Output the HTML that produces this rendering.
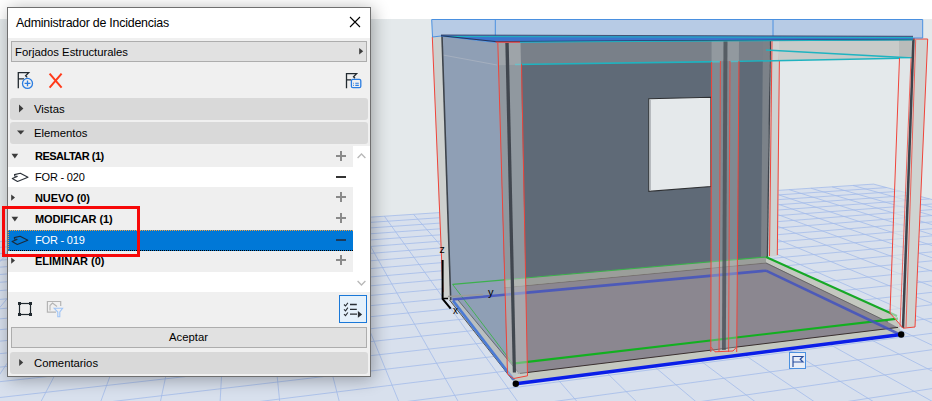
<!DOCTYPE html>
<html><head><meta charset="utf-8">
<style>
*{margin:0;padding:0;box-sizing:border-box}
html,body{width:932px;height:401px;overflow:hidden;background:#fff;font-family:"Liberation Sans",sans-serif}
svg{position:absolute;left:0;top:0;overflow:visible}
.dlg{position:absolute;left:7px;top:7px;width:364px;height:370px;border:1px solid #6f6f6f;background:#f0f0f0;box-shadow:2px 2px 16px rgba(0,0,0,0.32)}
.a{position:absolute;white-space:nowrap;line-height:1}
.t{font-size:11.3px;color:#000}
.box{background:#e1e1e1;border:1px solid #adadad}
.bar{background:#d9d9d9;border-radius:3px}
.b{font-weight:bold;font-size:11px;letter-spacing:-0.5px;color:#000}
.n{font-size:11px;letter-spacing:-0.2px;color:#000}

</style></head><body>
<svg id="scene" width="932" height="401" viewBox="0 0 932 401">
<rect x="0" y="19" width="932" height="382" fill="#e4e9eb"/>
<polygon points="-261.1,258.6 873.5,184.1 1526.8,356.5 -1731.1,964.6" fill="#d8e0ed"/>
<path d="M-1731.1 964.6L1526.8 356.5 M-1524.4 865.3L1475.8 343.0 M-1357.0 784.9L1428.7 330.6 M-1218.5 718.4L1385.0 319.1 M-1102.2 662.5L1344.4 308.4 M-1003.0 614.9L1306.6 298.4 M-917.4 573.8L1271.4 289.1 M-842.9 538.0L1238.3 280.4 M-777.4 506.6L1207.4 272.2 M-719.3 478.7L1178.3 264.5 M-667.5 453.8L1150.9 257.3 M-621.0 431.5L1125.0 250.5 M-579.0 411.3L1100.6 244.0 M-540.9 393.0L1077.5 237.9 M-506.2 376.4L1055.6 232.2 M-474.5 361.1L1034.8 226.7 M-445.3 347.1L1015.1 221.5 M-418.4 334.2L996.3 216.5 M-393.6 322.3L978.4 211.8 M-370.5 311.2L961.3 207.3 M-349.1 300.9L945.0 203.0 M-329.1 291.3L929.5 198.9 M-310.4 282.3L914.6 195.0 M-293.0 273.9L900.3 191.2 M-276.5 266.0L886.6 187.6 M-261.1 258.6L873.5 184.1 M-1731.1 964.6L-261.1 258.6 M-1499.5 921.3L-217.8 255.8 M-1288.3 881.9L-175.6 253.0 M-1094.9 845.8L-134.4 250.3 M-917.1 812.6L-94.2 247.7 M-753.1 782.0L-54.8 245.1 M-601.4 753.7L-16.4 242.6 M-460.6 727.4L21.1 240.1 M-329.6 703.0L57.9 237.7 M-207.4 680.2L93.8 235.3 M-93.2 658.9L128.9 233.0 M13.9 638.9L163.2 230.8 M114.4 620.1L196.9 228.6 M209.0 602.5L229.8 226.4 M298.1 585.8L262.0 224.3 M382.2 570.1L293.6 222.2 M461.8 555.3L324.5 220.2 M537.1 541.2L354.7 218.2 M608.6 527.9L384.4 216.2 M676.4 515.2L413.5 214.3 M740.9 503.2L442.0 212.5 M802.4 491.7L470.0 210.6 M860.9 480.8L497.4 208.8 M916.8 470.4L524.2 207.1 M970.2 460.4L550.6 205.3 M1021.3 450.9L576.5 203.6 M1070.1 441.7L601.9 202.0 M1117.0 433.0L626.8 200.3 M1161.9 424.6L651.3 198.7 M1205.0 416.6L675.3 197.1 M1246.4 408.8L698.9 195.6 M1286.2 401.4L722.1 194.1 M1324.4 394.3L744.9 192.6 M1361.3 387.4L767.3 191.1 M1396.8 380.8L789.3 189.7 M1431.1 374.4L810.9 188.2 M1464.1 368.2L832.1 186.9 M1496.0 362.2L853.0 185.5 M1526.8 356.5L873.5 184.1" stroke="#a3bbea" stroke-width="0.8" fill="none"/>

<polygon points="452.6,284.4 766,257 897,316 901,335 515.8,383.7 449.5,300" fill="#c4c8c0" />
<polygon points="458,292 766,262.6 888,322 898,327.4 528,372.5 518,374 458,300" fill="#8b8790" />
<polygon points="452.6,284.4 766,257 766,262.6 452.6,292" fill="#9b9e9a" />
<line x1="452.6" y1="292.5" x2="766" y2="263" stroke="#6e6a66" stroke-width="0.8" stroke-opacity="1"/>
<line x1="766" y1="263" x2="888" y2="322" stroke="#5a5a5a" stroke-width="0.8" stroke-opacity="1"/>
<line x1="520" y1="373.4" x2="898" y2="327.4" stroke="#3a3030" stroke-width="1" stroke-opacity="1"/>
<polygon points="450,40 767,37 767,257 452.6,284.4" fill="#5f6a77" />
<polygon points="450,40 767,37 767,60.5 450,66" fill="#798089" />
<line x1="515" y1="64.5" x2="720" y2="61.6" stroke="#1fb3c0" stroke-width="1.6" stroke-opacity="1"/>
<polygon points="648.8,98.8 710.9,97.2 710.9,186.6 648.8,191.4" fill="#e5e9eb" stroke="#2e3033" stroke-width="1.1"/>
<line x1="650.3" y1="99.5" x2="650.3" y2="190.5" stroke="#b4b8bc" stroke-width="1.3" stroke-opacity="1"/>
<polygon points="763,38 770,38 767.4,257 761,258" fill="#7c8289" />
<polygon points="770,40 780,40 778,256 767.4,257" fill="#cfd2d1" />
<line x1="770.5" y1="38" x2="767.4" y2="257" stroke="#3e444c" stroke-width="1.3" stroke-opacity="1"/>
<line x1="772" y1="40" x2="769.5" y2="256" stroke="#f0443a" stroke-width="1" stroke-opacity="1"/>
<line x1="779.6" y1="40" x2="777.3" y2="255" stroke="#f0443a" stroke-width="1" stroke-opacity="1"/>
<polygon points="779,40 913,40 913,58 779,60.5" fill="#c8cbc9" />
<polygon points="899,40 913,40 913,58 899,58.3" fill="#b9bcba" />
<line x1="766" y1="50" x2="913" y2="58" stroke="#1fb3c0" stroke-width="1.3" stroke-opacity="1"/>
<line x1="730" y1="61.5" x2="913" y2="58" stroke="#1fb3c0" stroke-width="1.5" stroke-opacity="1"/>
<polygon points="432.3,37 442,36 450.7,300 442.6,299" fill="#cdd0ce" />
<line x1="432.3" y1="37" x2="443" y2="292" stroke="#f0443a" stroke-width="1" stroke-opacity="1"/>
<polygon points="442,36 498,42 507,374 458,300 450.7,300" fill="#8f9fb5" />
<line x1="443" y1="55" x2="497" y2="65" stroke="#a9b3c0" stroke-width="0.8" stroke-opacity="1"/>
<line x1="442" y1="36" x2="450.7" y2="300" stroke="#3e444c" stroke-width="1.6" stroke-opacity="1"/>
<polygon points="449.5,300 458,300 518,372 513,380" fill="#b9bfc0" />
<line x1="458" y1="300" x2="518" y2="372" stroke="#555a60" stroke-width="0.8" stroke-opacity="1"/>
<line x1="449.5" y1="300" x2="512.4" y2="379.8" stroke="#333" stroke-width="0.8" stroke-opacity="1"/>
<line x1="453" y1="300.6" x2="514" y2="380" stroke="#4b7bd4" stroke-width="2.6" stroke-opacity="1"/>
<line x1="452.6" y1="284.4" x2="512.7" y2="363.6" stroke="#45b055" stroke-width="1" stroke-opacity="1"/>
<line x1="452.6" y1="284.4" x2="766" y2="257" stroke="#3cb04c" stroke-width="1.1" stroke-opacity="1"/>
<line x1="766" y1="257" x2="897" y2="316" stroke="#16a826" stroke-width="2" stroke-opacity="1"/>
<line x1="512.7" y1="363.6" x2="898" y2="318.6" stroke="#12b020" stroke-width="2.2" stroke-opacity="1"/>
<line x1="452.6" y1="299.5" x2="766" y2="270.7" stroke="#4252c0" stroke-width="2.6" stroke-opacity="0.85"/>
<line x1="766" y1="270.7" x2="901" y2="335" stroke="#4252c0" stroke-width="2.6" stroke-opacity="0.85"/>
<polygon points="497.8,42 520.5,42 527.5,375.8 513.6,378.5 507.5,374" fill="#cdd0d0" fill-opacity="0.45"/>
<polygon points="505.3,42 508.7,42 516,372.4 512.8,372.4" fill="#41474f" />
<polyline points="497.8,42 507.5,374 513.6,378.5 527.5,375.8 521.5,64" fill="none" stroke="#f0443a" stroke-width="1" stroke-opacity="1"/>
<polygon points="711.6,40 739,40 736.7,352 710.8,352" fill="#c8cccc" fill-opacity="0.32"/>
<polygon points="723.5,40 727.5,40 725.8,350 722,350" fill="#474d55" fill-opacity="0.8"/>
<line x1="711.6" y1="62" x2="710.8" y2="352" stroke="#f0443a" stroke-width="1" stroke-opacity="1"/>
<line x1="720.4" y1="61" x2="719" y2="352" stroke="#f0443a" stroke-width="0.9" stroke-opacity="1"/>
<line x1="730" y1="61" x2="728.6" y2="352" stroke="#f0443a" stroke-width="0.9" stroke-opacity="1"/>
<line x1="739" y1="61" x2="736.7" y2="352" stroke="#f0443a" stroke-width="1" stroke-opacity="1"/>
<line x1="720" y1="40.5" x2="739" y2="40.5" stroke="#f0443a" stroke-width="1.3" stroke-opacity="1"/>
<polyline points="710.8,347 715,351.8 733,351 736.7,347" fill="none" stroke="#f0443a" stroke-width="1" stroke-opacity="1"/>
<polygon points="913,38 927.7,39 915,327 903,328.2" fill="#d0d3d1" />
<polygon points="899.5,58 913,58 903,328.2 890,313" fill="#dfe4e6" fill-opacity="0.6"/>
<line x1="913.5" y1="38" x2="903" y2="328" stroke="#3e444c" stroke-width="2.5" stroke-opacity="1"/>
<line x1="899.5" y1="58" x2="890" y2="313" stroke="#f0443a" stroke-width="1" stroke-opacity="1"/>
<line x1="911" y1="58" x2="900" y2="327" stroke="#f0443a" stroke-width="0.8" stroke-opacity="1"/>
<line x1="915.7" y1="40" x2="906" y2="327" stroke="#f0443a" stroke-width="0.8" stroke-opacity="1"/>
<polyline points="913,39 927.7,39 915,327 903.2,328.2 890,313" fill="none" stroke="#f0443a" stroke-width="1" stroke-opacity="1"/>
<line x1="515.8" y1="383.7" x2="901.2" y2="334.5" stroke="#0a1ee8" stroke-width="3.5" stroke-opacity="1"/>
<polygon points="431.7,19.5 922.7,19.5 922.7,38 913,38 495,42.4 441,36 432.5,37" fill="#b7cbe5" stroke="#4a90e0" stroke-width="1"/>
<line x1="495.3" y1="19.5" x2="495.3" y2="42.4" stroke="#4a90e0" stroke-width="1" stroke-opacity="1"/>
<line x1="773" y1="19.5" x2="773" y2="38.5" stroke="#4a90e0" stroke-width="1" stroke-opacity="1"/>
<polygon points="441,35 913,36.3 913,40 495,42 441,36" fill="#3d74cc" />
<line x1="441" y1="35" x2="913" y2="36.3" stroke="#3a4a6a" stroke-width="0.9" stroke-opacity="1"/>
<line x1="445" y1="36.5" x2="913" y2="37.6" stroke="#1fb3c0" stroke-width="1" stroke-opacity="1"/>
<polyline points="441,35.8 495,41.5 913,39.6" fill="none" stroke="#22355f" stroke-width="1.1" stroke-opacity="1"/>
<line x1="520" y1="42.2" x2="913" y2="39.9" stroke="#1fb3c0" stroke-width="1" stroke-opacity="1"/>
<line x1="495.5" y1="42.2" x2="520" y2="42.2" stroke="#f0443a" stroke-width="1.2" stroke-opacity="1"/>
<polyline points="442.6,260 442.6,299 450.7,308.7" fill="none" stroke="#000" stroke-width="2" stroke-opacity="1"/>
<line x1="443" y1="298.5" x2="448" y2="298.5" stroke="#000" stroke-width="1.5" stroke-opacity="1"/>
<line x1="448" y1="296.5" x2="483" y2="294.4" stroke="#9a9a9a" stroke-width="1.5" stroke-opacity="1"/>
<text x="439.5" y="253" font-size="10.5" font-family="Liberation Sans" fill="#000">z</text>
<text x="488" y="295.5" font-size="11" font-family="Liberation Sans" fill="#000">y</text>
<text x="453" y="314" font-size="10" font-family="Liberation Sans" fill="#000">x</text>
<circle cx="515.8" cy="383.7" r="3.2" fill="#000"/>
<circle cx="901.2" cy="334.5" r="3.2" fill="#000"/>
<rect x="789.5" y="352.5" width="16" height="16" fill="#e8eef8" stroke="#4a90e0"/>
<path d="M793 367V356.5H803L800.2 359.3L803 362H793" fill="none" stroke="#2a50a0" stroke-width="1.2"/>
</svg>
<div class="dlg"></div>
<div class="a" style="left:8px;top:8px;width:362px;height:30px;background:#fff"></div>
<div class="a t" style="left:16px;top:17px;font-size:12.4px;letter-spacing:-0.22px">Administrador de Incidencias</div>
<svg width="932" height="401">
 <path d="M350 17L360 27M360 17L350 27" stroke="#000" stroke-width="1.1"/>
</svg>
<div class="a box" style="left:11px;top:41px;width:356px;height:21px"></div>
<div class="a t" style="left:15px;top:47px">Forjados Estructurales</div>
<div class="a bar" style="left:10px;top:98px;width:358px;height:22px"></div>
<div class="a t" style="left:34px;top:104px">Vistas</div>
<div class="a bar" style="left:10px;top:122px;width:358px;height:22px"></div>
<div class="a t" style="left:34px;top:128px">Elementos</div>
<!-- list -->
<div class="a" style="left:8px;top:146px;width:362px;height:146px;background:#fff"></div>
<div class="a" style="left:8px;top:146px;width:345px;height:21px;background:#efefef"></div>
<div class="a" style="left:8px;top:187px;width:345px;height:21px;background:#efefef"></div>
<div class="a" style="left:8px;top:208px;width:345px;height:22px;background:#efefef"></div>
<div class="a" style="left:8px;top:230px;width:345px;height:21px;background:#0078d7;border-top:1px dotted #f0a040;border-left:1px dotted #f0a040;border-bottom:1px dotted #000"></div>
<div class="a" style="left:8px;top:251px;width:345px;height:21px;background:#efefef"></div>
<div class="a b" style="left:35px;top:151px">RESALTAR (1)</div>
<div class="a n" style="left:35px;top:172px">FOR - 020</div>
<div class="a b" style="left:35px;top:193px;letter-spacing:-0.08px">NUEVO (0)</div>
<div class="a b" style="left:35px;top:214px;letter-spacing:-0.1px">MODIFICAR (1)</div>
<div class="a n" style="left:35px;top:235px;color:#fff">FOR - 019</div>
<div class="a b" style="left:35px;top:256px;letter-spacing:-0.02px">ELIMINAR (0)</div>
<div class="a box" style="left:11px;top:327px;width:356px;height:21px"></div>
<div class="a t" style="left:169px;top:332px">Aceptar</div>
<div class="a bar" style="left:10px;top:352px;width:358px;height:22px"></div>
<div class="a t" style="left:34px;top:358px">Comentarios</div>
<div class="a" style="left:339px;top:295px;width:28px;height:28px;border:1.3px solid #1a78d8;background:#e5f1fb"></div>
<svg width="932" height="401">
 <g fill="#3c3c3c">
  <path d="M359.2 47.9L363.2 51.2L359.2 54.6Z"/>
  <path d="M19 104.6L23.4 108.5L19 112.4Z"/>
  <path d="M17 130.6L24.4 130.6L20.7 134.6Z"/>
  <path d="M11.5 153.8L18.2 153.8L14.85 158.4Z"/>
  <path d="M11.2 194.4L15 197.6L11.2 200.8Z"/>
  <path d="M11.5 216.8L18.2 216.8L14.85 221.4Z"/>
  <path d="M11.2 257.4L15 260.6L11.2 263.8Z"/>
  <path d="M19.2 359L23.2 362.5L19.2 366Z"/>
 </g>
 <g fill="#8a8a8a">
  <rect x="340" y="151" width="2" height="10"/><rect x="336" y="155" width="10" height="2"/>
  <rect x="340" y="192" width="2" height="10"/><rect x="336" y="196" width="10" height="2"/>
  <rect x="340" y="213" width="2" height="10"/><rect x="336" y="217" width="10" height="2"/>
  <rect x="340" y="255" width="2" height="10"/><rect x="336" y="259" width="10" height="2"/>
 </g>
 <rect x="336" y="176" width="10" height="2" fill="#333"/>
 <rect x="336" y="239" width="10" height="2" fill="#1c3a5a"/>
 <path d="M357.6 158L361.5 154L365.4 158M357.6 281L361.5 285L365.4 281" fill="none" stroke="#b8b8b8" stroke-width="1.3"/>
 <path d="M12.3 178.5L17.5 181.5L28 177.3L20.3 173.3L14.5 174.6L14.8 176.2L17.2 176.4Z" fill="none" stroke="#2a3038" stroke-width="1.1" stroke-linejoin="round"/>
 <path d="M12.1 241.5L17.3 244.5L27.8 240.3L20.1 236.3L14.3 237.6L14.6 239.2L17 239.4Z" fill="none" stroke="#1a2a3a" stroke-width="1.1" stroke-linejoin="round"/>
 <!-- toolbar icons -->
 <path d="M18.3 88.2V72.6H28.7L25.6 75.8L27.2 77.4M18.3 78.8H24" fill="none" stroke="#222a30" stroke-width="1.3"/>
 <circle cx="27.5" cy="83.4" r="5" fill="#f0f0f0" stroke="#2a7de1" stroke-width="1.3"/>
 <path d="M24.6 83.4H30.4M27.5 80.5V86.3" stroke="#2a7de1" stroke-width="1.3"/>
 <path d="M49.6 73.6L61.6 87.6M61.6 73.6L49.6 87.6" stroke="#ff3a1a" stroke-width="2"/>
 <path d="M346.5 88.2V73.6H356.6L353.5 76.8L355 78.3M346.5 79.8H351" fill="none" stroke="#222a30" stroke-width="1.3"/>
 <rect x="351.4" y="79.3" width="9.4" height="8.4" rx="1.5" fill="#f0f0f0" stroke="#2a7de1" stroke-width="1.3"/>
 <path d="M355.3 83.2H358.8M355.3 85.4H358.8M353.2 83.2H354M353.2 85.4H354" stroke="#2a7de1" stroke-width="1.1"/>
 <!-- bottom toolbar -->
 <rect x="19.5" y="303.5" width="11" height="11" fill="none" stroke="#222a30" stroke-width="1.2"/>
 <g fill="#222a30"><rect x="18" y="302" width="3" height="3"/><rect x="29" y="302" width="3" height="3"/><rect x="18" y="313" width="3" height="3"/><rect x="29" y="313" width="3" height="3"/></g>
 <path d="M56 312.2H47.4V301.5H60.7V306" fill="none" stroke="#b4b4b4" stroke-width="1.2"/>
 <path d="M50 310.5V305.5L52.5 303L57 306.5" fill="none" stroke="#b4b4b4" stroke-width="1.1"/>
 <path d="M54.2 308.3H62.6L59.8 312V316.7H57.8V312Z" fill="#f0f0f0" stroke="#9fc4f6" stroke-width="1.1"/>
 <path d="M344 304.5L345.5 306L347.9 302.8M344 309.4L345.5 310.9L347.9 307.7M344 314.2L345.5 315.7L347.9 312.5" fill="none" stroke="#2a2f35" stroke-width="1.1"/>
 <path d="M350 304.5H356.8M350 309.4H356.8M350 314.2H357" stroke="#2a2f35" stroke-width="1.3"/>
 <path d="M357.9 311L362.1 314.4L357.9 317.8Z" fill="#2a2f35"/>
</svg>
<div class="a" style="left:2px;top:206px;width:138px;height:51px;border:3.6px solid #f70808"></div>

</body></html>
